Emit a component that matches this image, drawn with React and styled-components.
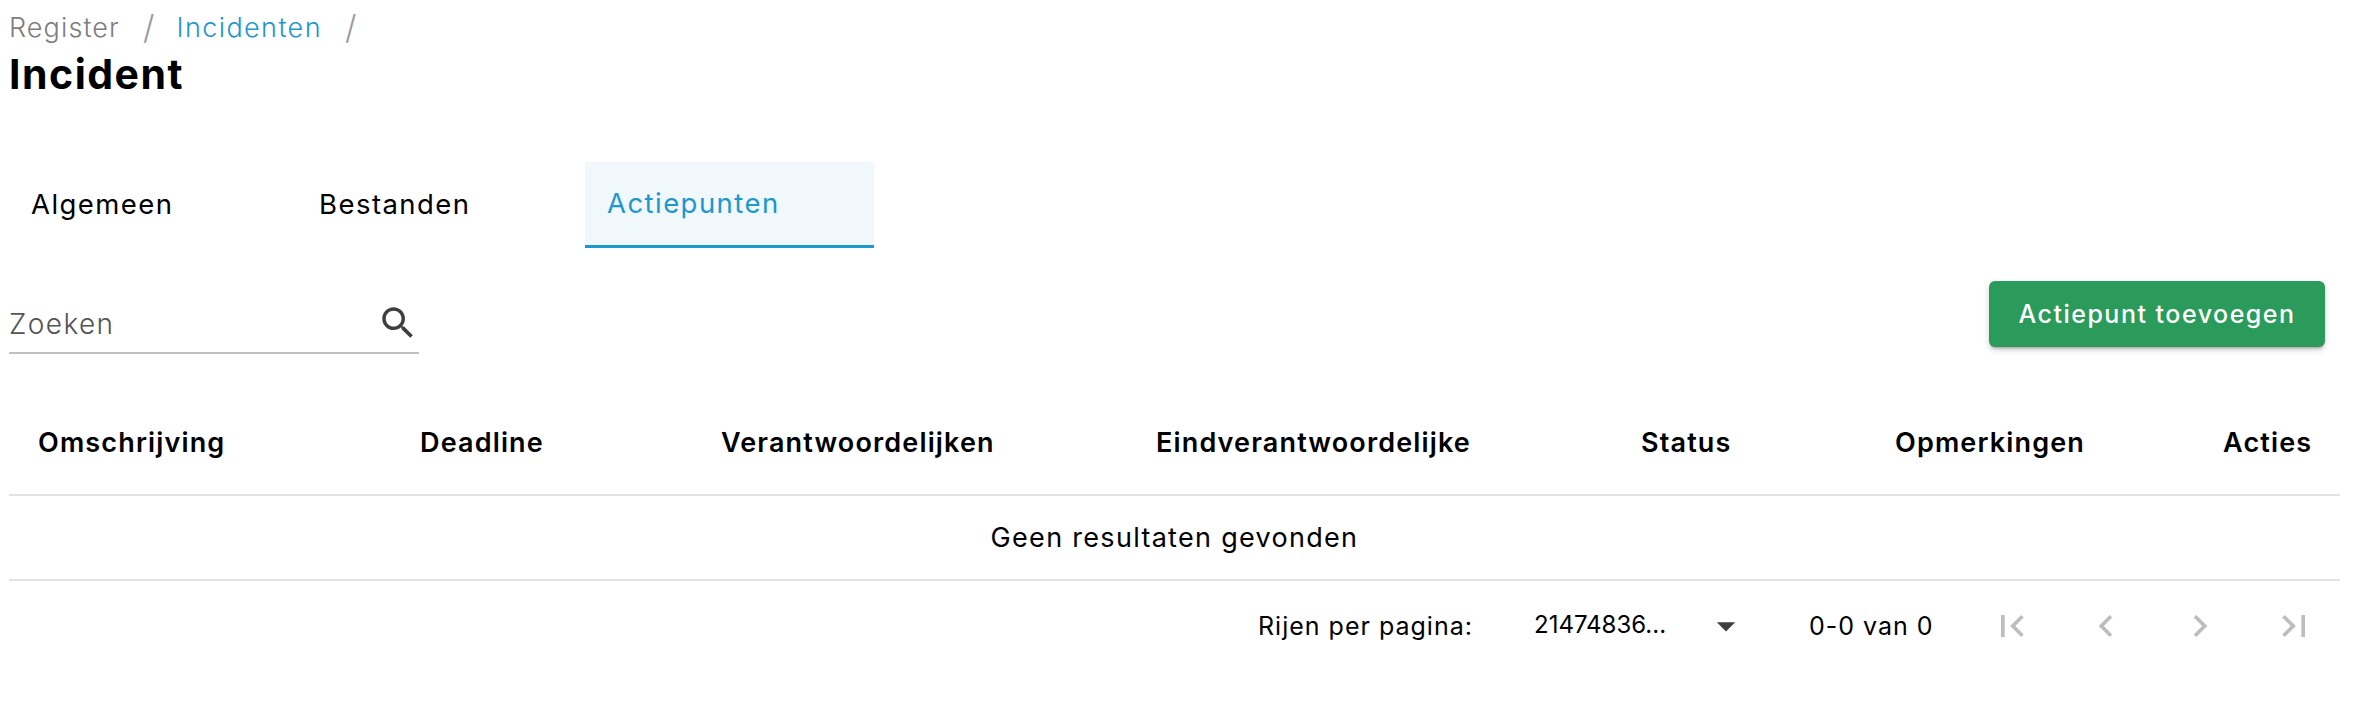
import React from "react";
import styled, { createGlobalStyle } from "styled-components";

const GlobalStyle = createGlobalStyle`
  html, body {
    margin: 0;
    background: #fff;
    font-family: "Inter", "Open Sans", sans-serif;
  }
`;

const Page = styled.div`
  width: 2370px;
  height: 712px;
  box-sizing: border-box;
  padding: 0 30px 0 9px;
  overflow: hidden;
`;

const Breadcrumbs = styled.nav`
  display: flex;
  align-items: center;
  height: 54px;
  font-size: 27px;
  font-weight: 300;
`;

const Crumb = styled.span`
  color: ${(p) => (p.$active ? "#1f97cb" : "#7d7d7d")};
  letter-spacing: ${(p) => (p.$active ? "1.4px" : "1.1px")};
`;

const Separator = styled.span`
  color: #9a9a9a;
  font-size: 33px;
  margin: 0 22px 0 23px;
  font-weight: 300;
`;

const Title = styled.h1`
  margin: 0;
  font-size: 41px;
  line-height: 40px;
  letter-spacing: 1.5px;
  font-weight: 700;
  color: #000;
  height: 108px;
`;

const Tabs = styled.div`
  display: flex;
  height: 86px;
`;

const Tab = styled.div`
  box-sizing: border-box;
  width: ${(p) => p.$width}px;
  height: 86px;
  padding: 0 0 2px 22px;
  display: flex;
  align-items: center;
  font-size: 27.5px;
  letter-spacing: 1.45px;
  color: ${(p) => (p.$active ? "#1f97cb" : "#000")};
  background: ${(p) => (p.$active ? "#f0f8fc" : "transparent")};
  border-bottom: ${(p) => (p.$active ? "3px solid #1f97cb" : "0")};
`;

const Toolbar = styled.div`
  display: flex;
  justify-content: space-between;
  align-items: flex-start;
  padding: 33px 15px 0 0;
  height: 140px;
  box-sizing: border-box;
`;

const Search = styled.div`
  box-sizing: border-box;
  width: 410px;
  height: 60px;
  margin-top: 13px;
  padding-top: 2px;
  display: flex;
  align-items: center;
  justify-content: space-between;
  border-bottom: 2px solid #c0c0c0;
  font-size: 28px;
  letter-spacing: 1.4px;
  color: #555;
  font-weight: 300;
`;

const SearchIcon = styled.svg`
  width: 42px;
  height: 42px;
  fill: #3f3f3f;
  margin-top: -2px;
`;

const AddButton = styled.button`
  width: 336px;
  height: 66px;
  border: 0;
  border-radius: 6px;
  background: #2a9b5b;
  color: #fff;
  font: 500 25px "Inter", sans-serif;
  letter-spacing: 1.5px;
  box-shadow: 0 3px 3px -2px rgba(0, 0, 0, 0.3), 0 3px 6px 0 rgba(0, 0, 0, 0.16);
`;

const columns = "382px 301px 435px 485px 254px 328px 1fr";

const HeaderRow = styled.div`
  display: grid;
  grid-template-columns: ${columns};
  height: 108px;
  box-sizing: border-box;
  padding-top: 2px;
  align-items: center;
  border-bottom: 2px solid #e2e2e2;
`;

const HeaderCell = styled.div`
  padding-left: 29px;
  font-size: 27px;
  letter-spacing: 1.15px;
  font-weight: 600;
  color: #000;
  white-space: nowrap;
`;

const EmptyRow = styled.div`
  height: 85px;
  box-sizing: border-box;
  display: flex;
  align-items: center;
  justify-content: center;
  border-bottom: 2px solid #e2e2e2;
  font-size: 27px;
  letter-spacing: 1.3px;
  color: #000;
`;

const Pagination = styled.div`
  display: flex;
  align-items: center;
  height: 90px;
  font-size: 25px;
  letter-spacing: 1px;
  color: #000;
  padding-left: 1249px;
`;

const RowsLabel = styled.span`
  width: 276px;
`;

const RowsSelect = styled.span`
  width: 275px;
  display: flex;
  align-items: center;
`;

const RowsValue = styled.span`
  width: 170px;
  font-size: 24px;
  letter-spacing: 0;
  margin-top: -4px;
`;

const Caret = styled.svg`
  width: 44px;
  height: 44px;
  fill: #3f3f3f;
`;

const RangeLabel = styled.span`
  width: 181px;
`;

const PageButton = styled.svg`
  width: 44px;
  height: 44px;
  fill: #bdbdbd;
  margin-right: ${(p) => p.$gap}px;
`;

const PageButtons = styled.div`
  display: flex;
  align-items: center;
`;

const headers = [
  "Omschrijving",
  "Deadline",
  "Verantwoordelijken",
  "Eindverantwoordelijke",
  "Status",
  "Opmerkingen",
  "Acties",
];

const App = () => {
  return (
    <>
      <GlobalStyle />
      <Page>
        <Breadcrumbs>
          <Crumb>Register</Crumb>
          <Separator>/</Separator>
          <Crumb $active>Incidenten</Crumb>
          <Separator>/</Separator>
        </Breadcrumbs>
        <Title>Incident</Title>
        <Tabs>
          <Tab $width={288}>Algemeen</Tab>
          <Tab $width={288}>Bestanden</Tab>
          <Tab $width={289} $active>Actiepunten</Tab>
        </Tabs>
        <Toolbar>
          <Search>
            Zoeken
            <SearchIcon viewBox="0 0 24 24">
              <path d="M15.5 14h-.79l-.28-.27C15.41 12.59 16 11.11 16 9.5 16 5.91 13.09 3 9.5 3S3 5.91 3 9.5 5.91 16 9.5 16c1.61 0 3.09-.59 4.23-1.57l.27.28v.79l5 4.99L20.49 19l-4.99-5zm-6 0C7.01 14 5 11.99 5 9.5S7.01 5 9.5 5 14 7.01 14 9.5 11.99 14 9.5 14z" />
            </SearchIcon>
          </Search>
          <AddButton>Actiepunt toevoegen</AddButton>
        </Toolbar>
        <HeaderRow>
          {headers.map((h) => (
            <HeaderCell key={h}>{h}</HeaderCell>
          ))}
        </HeaderRow>
        <EmptyRow>Geen resultaten gevonden</EmptyRow>
        <Pagination>
          <RowsLabel>Rijen per pagina:</RowsLabel>
          <RowsSelect>
            <RowsValue>21474836...</RowsValue>
            <Caret viewBox="0 0 24 24"><path d="M7 10l5 5 5-5z" /></Caret>
          </RowsSelect>
          <RangeLabel>0-0 van 0</RangeLabel>
          <PageButtons>
            <PageButton $gap={50} viewBox="0 0 24 24"><path d="M18.41 16.59L13.82 12l4.59-4.59L17 6l-6 6 6 6zM6 6h2v12H6z" /></PageButton>
            <PageButton $gap={50} viewBox="0 0 24 24"><path d="M15.41 7.41L14 6l-6 6 6 6 1.41-1.41L10.83 12z" /></PageButton>
            <PageButton $gap={50} viewBox="0 0 24 24"><path d="M10 6L8.59 7.41 13.17 12l-4.58 4.59L10 18l6-6z" /></PageButton>
            <PageButton $gap={0} viewBox="0 0 24 24"><path d="M5.59 7.41L10.18 12l-4.59 4.59L7 18l6-6-6-6zM16 6h2v12h-2z" /></PageButton>
          </PageButtons>
        </Pagination>
      </Page>
    </>
  );
};

export default App;
